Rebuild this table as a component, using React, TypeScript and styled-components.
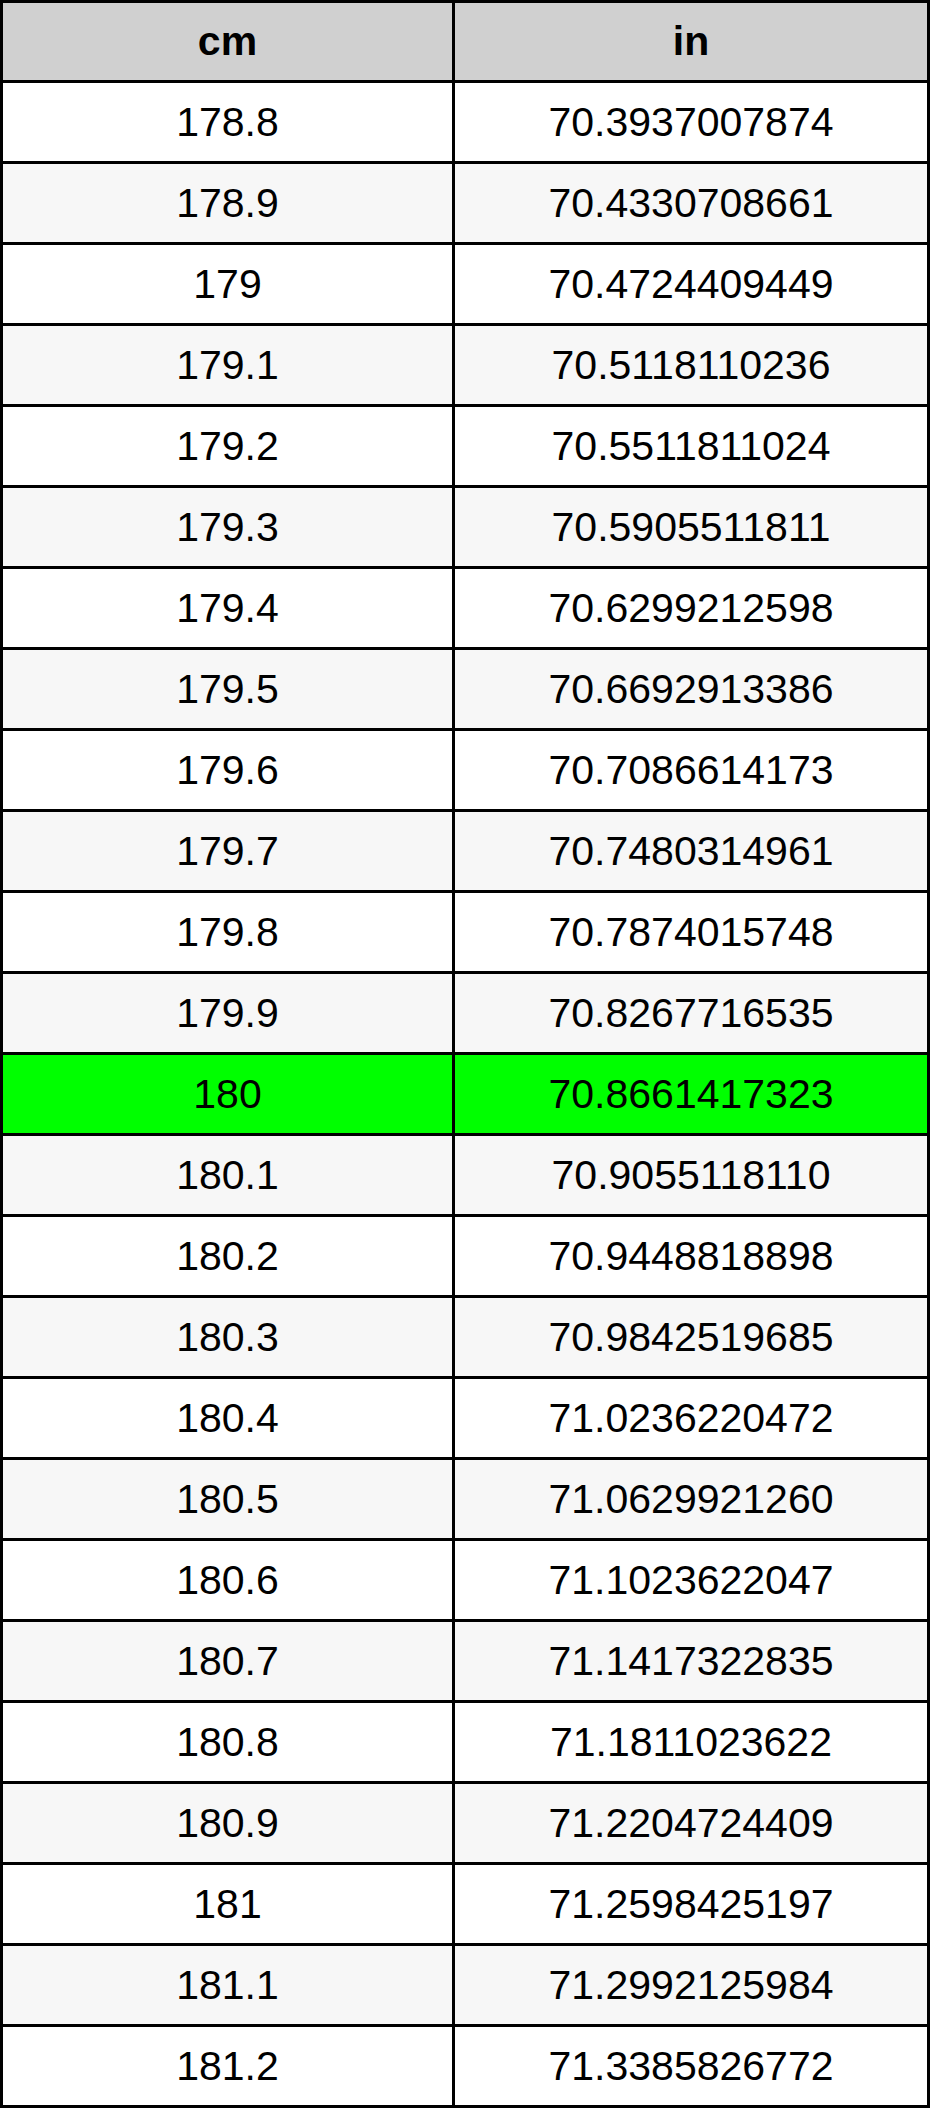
import React from "react";
import styled, { createGlobalStyle } from "styled-components";

const GlobalStyle = createGlobalStyle`
  body {
    margin: 0;
    background: #ffffff;
    font-family: "Liberation Sans", Arial, sans-serif;
  }
`;

const Table = styled.div`
  width: 930px;
  box-sizing: border-box;
  border: 3px solid #000000;
  display: flex;
  flex-direction: column;
`;

const Row = styled.div<{ $bg: string; $height: number; $last?: boolean }>`
  display: grid;
  grid-template-columns: 452px 1fr;
  box-sizing: border-box;
  height: ${(p) => p.$height}px;
  background: ${(p) => p.$bg};
  border-bottom: ${(p) => (p.$last ? "none" : "3px solid #000000")};
`;

const Cell = styled.div<{ $bold?: boolean }>`
  display: flex;
  align-items: center;
  justify-content: center;
  font-size: 41px;
  font-weight: ${(p) => (p.$bold ? 700 : 400)};
  color: #000000;
  &:first-child {
    border-right: 3px solid #000000;
  }
`;

const rows: [string, string][] = [
  ["178.8", "70.3937007874"],
  ["178.9", "70.4330708661"],
  ["179", "70.4724409449"],
  ["179.1", "70.5118110236"],
  ["179.2", "70.5511811024"],
  ["179.3", "70.5905511811"],
  ["179.4", "70.6299212598"],
  ["179.5", "70.6692913386"],
  ["179.6", "70.7086614173"],
  ["179.7", "70.7480314961"],
  ["179.8", "70.7874015748"],
  ["179.9", "70.8267716535"],
  ["180", "70.8661417323"],
  ["180.1", "70.9055118110"],
  ["180.2", "70.9448818898"],
  ["180.3", "70.9842519685"],
  ["180.4", "71.0236220472"],
  ["180.5", "71.0629921260"],
  ["180.6", "71.1023622047"],
  ["180.7", "71.1417322835"],
  ["180.8", "71.1811023622"],
  ["180.9", "71.2204724409"],
  ["181", "71.2598425197"],
  ["181.1", "71.2992125984"],
  ["181.2", "71.3385826772"],
];

const rowColor = (i: number, cm: string) => {
  if (cm === "180") return "#00ff00";
  return i % 2 === 0 ? "#ffffff" : "#f7f7f7";
};

const App = () => {
  return (
    <>
      <GlobalStyle />
      <Table>
        <Row $bg="#d0d0d0" $height={80}>
          <Cell $bold>cm</Cell>
          <Cell $bold>in</Cell>
        </Row>
        {rows.map(([cm, inch], i) => (
          <Row
            key={cm}
            $bg={rowColor(i, cm)}
            $height={i === rows.length - 1 ? 78 : 81}
            $last={i === rows.length - 1}
          >
            <Cell>{cm}</Cell>
            <Cell>{inch}</Cell>
          </Row>
        ))}
      </Table>
    </>
  );
};

export default App;
